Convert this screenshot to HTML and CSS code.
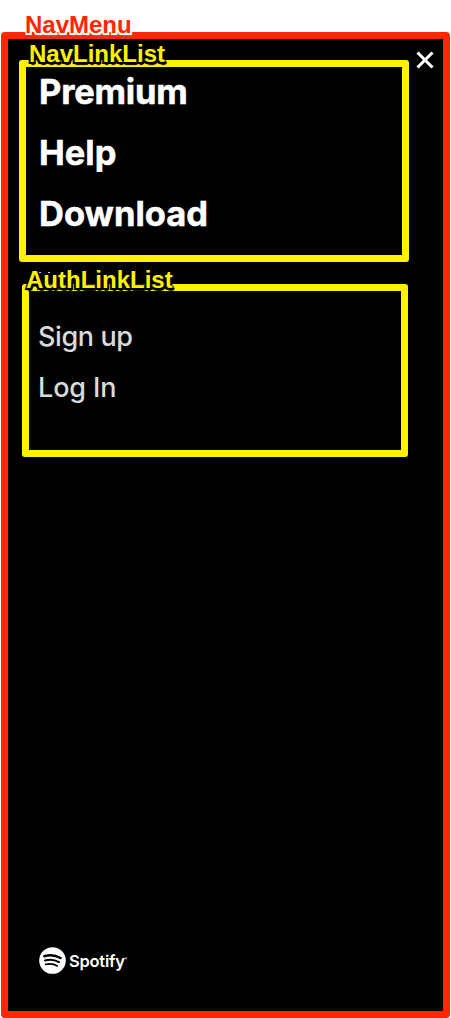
FILE: index.html
```html
<!DOCTYPE html>
<html lang="en">
<head>
<meta charset="utf-8">
<title>NavMenu</title>
<link rel="stylesheet" href="styles.css">
</head>
<body>
<nav class="menu">
  <span class="label label-menu">NavMenu</span>
  <button class="close" aria-label="Close">
    <svg width="18" height="18" viewBox="0 0 18 18"><path d="M1.5 1.5 16.5 16.5M16.5 1.5 1.5 16.5" stroke="#fff" stroke-width="3" fill="none"/></svg>
  </button>
  <section class="group nav-links">
    <span class="label label-nav">NavLinkList</span>
    <a class="link premium">Premium</a>
    <a class="link help">Help</a>
    <a class="link download">Download</a>
  </section>
  <i class="divider"></i>
  <section class="group auth-links">
    <span class="label label-auth">AuthLinkList</span>
    <a class="auth signup">Sign up</a>
    <a class="auth login">Log In</a>
  </section>
  <footer class="brand">
    <svg width="27" height="27" viewBox="0 0 27 27"><circle cx="13.5" cy="13.5" r="13.3" fill="#fff"/><g fill="none" stroke="#000" stroke-linecap="round"><path d="M5.3 9.2Q14 6.8 21.6 11" stroke-width="2.5"/><path d="M6 13.5Q13.4 11.4 20 15.1" stroke-width="2.1"/><path d="M6.7 17.4Q13 15.8 18.4 18.9" stroke-width="1.7"/></g></svg>
    <span class="wordmark">Spotify</span><span class="tm">®</span>
  </footer>
</nav>
</body>
</html>
```

FILE: styles.css
```css
* { box-sizing: border-box; }
body { margin: 0; padding: 32px 1px 0; height: 1018px; background: #fff; overflow: hidden; }
.menu {
  position: relative;
  display: flex;
  flex-direction: column;
  height: 986px;
  padding: 21px 34px 37px 11px;
  border: 7px solid #ff2600;
  border-radius: 4px;
  background: #000;
  color: #fff;
  font-family: Inter, sans-serif;
}
.close { position: absolute; top: 12px; right: 9px; width: 18px; height: 18px; padding: 0; border: 0; background: none; }
.close svg { display: block; }
.group { position: relative; display: flex; flex-direction: column; align-items: flex-start; border: 7px solid #fff200; border-radius: 3px; }
.nav-links { width: 390px; height: 202px; padding-left: 13px; }
.auth-links { width: 386px; height: 173px; margin-left: 3px; padding: 21px 0 0 9px; }
.label { position: absolute; font: bold 24px/28px "Liberation Sans", Arial, sans-serif; white-space: nowrap; }
.label-menu { left: 17px; top: -28px; color: #ff2600; text-shadow: -1px 0 #fff, 1px 0 #fff, 0 -1px #fff, 0 2px #fff, 2px 2px #fff, -1px 2px #fff, 1px 3px 2px #777; }
.label-nav, .label-auth { color: #fff200; text-shadow: -1px 0 #000, 1px 0 #000, 0 -1px #000, 0 2px #000, 2px 2px #000, -2px 2px #000, 1px 3px 1px #000; }
.label-nav { left: 3px; top: -27px; }
.label-auth { left: -3px; top: -25px; }
.link { height: 61px; padding-top: 4px; font-size: 34.5px; line-height: 42px; font-weight: 700; -webkit-text-stroke: 0.5px #fff; }
.premium { letter-spacing: -0.2px; }
.auth { height: 51px; font-size: 27px; line-height: 50px; font-weight: 500; color: #d9dadc; }
.signup { letter-spacing: -0.4px; }
.login { letter-spacing: -0.1px; }
.divider { height: 22px; margin-left: 20px; padding-top: 10px; }
.divider::before { content: ""; display: block; width: 12px; height: 1px; background: repeating-linear-gradient(90deg, #ccc 0 2px, #000 2px 9px); }
.brand { display: flex; align-items: center; height: 27px; margin: auto 0 0 20px; }
.wordmark { margin-left: 3px; font-size: 16.5px; line-height: 20px; font-weight: 600; letter-spacing: -0.25px; }
.tm { align-self: flex-start; margin-top: 9px; font-size: 4px; line-height: 5px; }
```
